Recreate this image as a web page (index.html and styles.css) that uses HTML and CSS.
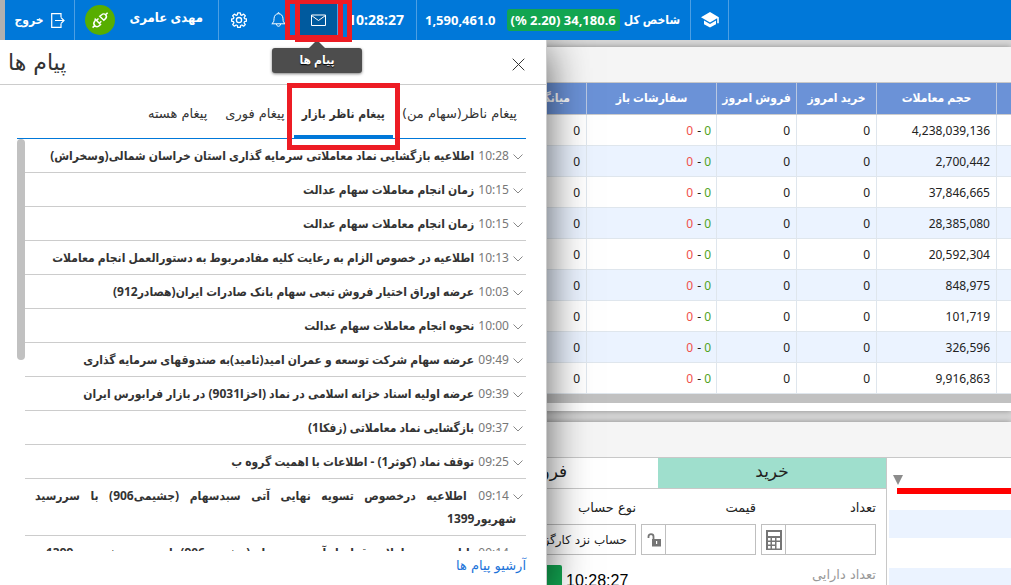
FILE: index.html
```html
<!DOCTYPE html>
<html lang="fa" dir="rtl">
<head>
<meta charset="utf-8">
<title>پیام ها</title>
<link rel="stylesheet" href="styles.css">
</head>
<body>
<header class="topbar">
  <div class="topbar-space"></div>
  <button class="top-item academy" aria-label="آموزش">
    <svg width="18" height="16" viewBox="0 0 18 16"><path fill="#fff" d="M9 0 0 5.2l9 5.2 7.2-4.2v5h1.6v-6zM3 8.6v3.6L9 15.600l6-3.400V8.600L9 12z"/></svg>
  </button>
  <div class="top-item index">
    <span class="index-label">شاخص کل</span>
    <span class="index-change" dir="ltr">(% 2.20) 34,180.6</span>
    <span class="index-value">1,590,461.0</span>
  </div>
  <div class="top-item clock">10:28:27</div>
  <div class="mail-wrap">
    <button class="mail" aria-label="پیام ها">
      <svg width="15" height="12" viewBox="0 0 15 12" fill="none" stroke="#fff"><path d="M.5 1h14v10.500H.5zM.5 1.500l7 5 7-5"/></svg>
    </button>
    <div class="tooltip" role="tooltip">پیام ها</div>
    <span class="mark mark-outer"></span>
    <span class="mark mark-inner"></span>
  </div>
  <button class="top-item bell" aria-label="اعلان ها">
    <svg width="15" height="16" viewBox="0 0 15 16" fill="none" stroke="#fff"><path d="M.8 11.800c1.800-1.300 2.200-2.500 2.200-5C3 3.700 5 1.700 7.500 1.700S12 3.700 12 6.800c0 2.500.4 3.700 2.200 5zM5.500 12c0 3 4 3 4 0M6.700 1.500c0-1.200 1.600-1.200 1.600 0"/></svg>
  </button>
  <button class="top-item gear" aria-label="تنظیمات">
    <svg width="16" height="16" viewBox="0 0 16 16" fill="none" stroke="#fff" stroke-width="1.300"><path stroke-linejoin="round" d="m6.700.8 2.600 0 .4 2 1.200.5 1.700-1.200 1.700 1.700-1.200 1.700.5 1.200 1.900.3v2.200l-1.900.4-.5 1.200 1.200 1.700-1.700 1.700-1.700-1.200-1.200.5-.4 1.800H6.700l-.4-1.800-1.200-.5-1.700 1.200-1.700-1.700 1.200-1.700-.5-1.200L.6 9.200V7l1.800-.3.5-1.200-1.200-1.700 1.700-1.700 1.700 1.200 1.200-.5z"/><circle cx="8" cy="8.100" r="2.600"/></svg>
  </button>
  <div class="top-item user">
    <span class="user-name">مهدی عامری</span>
    <span class="plug">
      <svg width="18" height="18" viewBox="0 0 18 18" fill="none" stroke="#fff" stroke-width="1.500"><path d="m8.800 5.300 4 4 1.700-1.700c1.200-1.200 1.200-2.600.1-3.800-1.200-1.200-2.700-1.200-3.900 0zM14.600 3.700l2-2M4.300 8.300l5.200 5.200-1 1c-1.500 1.500-3.300 1.500-4.700.1-1.300-1.400-1.300-3.200.1-4.700zM3.800 14.400l-2.200 2.200M5.500 9.500l2-2M8.300 12.300l2-2"/></svg>
    </span>
  </div>
  <button class="top-item exit">
    <svg width="14" height="15" viewBox="0 0 14 15" fill="none" stroke="#fff" stroke-width="1.200"><path d="M10 4V.7H.7v13.600H10V11M4 7.500h9M9.800 4.300 13 7.500l-3.200 3.200"/></svg>
    <span>خروج</span>
  </button>
  <div class="edge"></div>
</header>

<main class="stage">
  <section class="panel">
    <div class="toolbar"></div>
    <table class="grid">
      <colgroup><col class="c-edge"><col class="c-volume"><col class="c-day"><col class="c-day"><col class="c-orders"><col class="c-day"><col></colgroup>
      <thead><tr><th></th><th>حجم معاملات</th><th>خرید امروز</th><th>فروش امروز</th><th>سفارشات باز</th><th class="th-avg">میانگین</th><th></th></tr></thead>
      <tbody>
        <tr><td></td><td>4,238,039,136</td><td>0</td><td>0</td><td><span class="up">0</span> - <span class="down">0</span></td><td>0</td><td></td></tr>
        <tr><td></td><td>2,700,442</td><td>0</td><td>0</td><td><span class="up">0</span> - <span class="down">0</span></td><td>0</td><td></td></tr>
        <tr><td></td><td>37,846,665</td><td>0</td><td>0</td><td><span class="up">0</span> - <span class="down">0</span></td><td>0</td><td></td></tr>
        <tr><td></td><td>28,385,080</td><td>0</td><td>0</td><td><span class="up">0</span> - <span class="down">0</span></td><td>0</td><td></td></tr>
        <tr><td></td><td>20,592,304</td><td>0</td><td>0</td><td><span class="up">0</span> - <span class="down">0</span></td><td>0</td><td></td></tr>
        <tr><td></td><td>848,975</td><td>0</td><td>0</td><td><span class="up">0</span> - <span class="down">0</span></td><td>0</td><td></td></tr>
        <tr><td></td><td>101,719</td><td>0</td><td>0</td><td><span class="up">0</span> - <span class="down">0</span></td><td>0</td><td></td></tr>
        <tr><td></td><td>326,596</td><td>0</td><td>0</td><td><span class="up">0</span> - <span class="down">0</span></td><td>0</td><td></td></tr>
        <tr><td></td><td>9,916,863</td><td>0</td><td>0</td><td><span class="up">0</span> - <span class="down">0</span></td><td>0</td><td></td></tr>
      </tbody>
    </table>
    <div class="hscroll"></div>
  </section>

  <section class="panel lower">
    <div class="toolbar"></div>
    <div class="lower-body">
      <div class="quote">
        <svg class="caret" width="10" height="10" viewBox="0 0 10 10"><path fill="#8c8c8c" d="M0 0h10L5 10z"/></svg>
        <div class="quote-bar"></div>
        <div class="quote-row"></div>
        <div class="quote-row"></div>
      </div>
      <form class="order">
        <div class="sides">
          <button type="button" class="side side-buy">خرید</button>
          <button type="button" class="side">فروش</button>
        </div>
        <div class="fields">
          <div class="field">
            <label for="qty">تعداد</label>
            <div class="control">
              <input id="qty" type="text">
              <button type="button" class="addon" aria-label="ماشین حساب">
                <svg width="16" height="20" viewBox="0 0 16 20"><path fill="#757575" fill-rule="evenodd" d="M0 0h16v20H0zM2 2v4h12V2zM2 8v2.500h2.500V8zM6 8v2.500h3V8zM10.500 8v2.500H14V8zM2 12v2.500h2.500V12zM6 12v2.500h3V12zM2 16v2.500h2.500V16zM6 16v2.500h3V16zM10.500 12v6.500H14V12z"/></svg>
              </button>
            </div>
          </div>
          <div class="field">
            <label for="price">قیمت</label>
            <div class="control">
              <input id="price" type="text">
              <button type="button" class="addon" aria-label="قفل قیمت">
                <svg width="14" height="14" viewBox="0 0 14 14"><path fill="none" stroke="#757575" stroke-width="1.800" d="M1.500 5V3.500c0-3.200 5-3.200 5 0V6"/><path fill="#757575" fill-rule="evenodd" d="M5 6h9v7.500H5zM9 8v3h1.200V8z"/></svg>
              </button>
            </div>
          </div>
          <div class="field">
            <label for="account">نوع حساب</label>
            <select id="account" class="account"><option>حساب نزد کارگزاری</option></select>
          </div>
        </div>
        <div class="order-foot">
          <span class="holding">تعداد دارایی</span>
          <span class="order-time">10:28:27</span>
          <button type="button" class="send" aria-label="ارسال خرید"></button>
        </div>
      </form>
    </div>
  </section>

  <aside class="drawer">
    <div class="drawer-head">
      <button class="close" aria-label="بستن"><svg width="13" height="13" viewBox="0 0 13 13" stroke="#333"><path d="m.7.7 11.600 11.600M12.300.7.7 12.300"/></svg></button>
      <h2>پیام ها</h2>
    </div>
    <nav class="tabs">
      <button class="tab">پیغام ناظر(سهام من)</button>
      <button class="tab tab-active">پیغام ناظر بازار<span class="mark mark-tab"></span></button>
      <button class="tab">پیغام فوری</button>
      <button class="tab">پیغام هسته</button>
    </nav>
    <div class="list-wrap">
      <ul class="list">
        <li><svg class="chev" viewBox="0 0 10 6"><path d="m.5.5 4.500 4.500L9.500.5"/></svg><time>10:28</time> <b>اطلاعیه بازگشایی نماد معاملاتی سرمایه گذاری استان خراسان شمالی(وسخراش)</b></li>
        <li><svg class="chev" viewBox="0 0 10 6"><path d="m.5.5 4.500 4.500L9.500.5"/></svg><time>10:15</time> <b>زمان انجام معاملات سهام عدالت</b></li>
        <li><svg class="chev" viewBox="0 0 10 6"><path d="m.5.5 4.500 4.500L9.500.5"/></svg><time>10:15</time> <b>زمان انجام معاملات سهام عدالت</b></li>
        <li><svg class="chev" viewBox="0 0 10 6"><path d="m.5.5 4.500 4.500L9.500.5"/></svg><time>10:13</time> <b>اطلاعیه در خصوص الزام به رعایت کلیه مفادمربوط به دستورالعمل انجام معاملات</b></li>
        <li><svg class="chev" viewBox="0 0 10 6"><path d="m.5.5 4.500 4.500L9.500.5"/></svg><time>10:03</time> <b>عرضه اوراق اختیار فروش تبعی سهام بانک صادرات ایران(هصادر912)</b></li>
        <li><svg class="chev" viewBox="0 0 10 6"><path d="m.5.5 4.500 4.500L9.500.5"/></svg><time>10:00</time> <b>نحوه انجام معاملات سهام عدالت</b></li>
        <li><svg class="chev" viewBox="0 0 10 6"><path d="m.5.5 4.500 4.500L9.500.5"/></svg><time>09:49</time> <b>عرضه سهام شرکت توسعه و عمران امید(ثامید)به صندوقهای سرمایه گذاری</b></li>
        <li><svg class="chev" viewBox="0 0 10 6"><path d="m.5.5 4.500 4.500L9.500.5"/></svg><time>09:39</time> <b>عرضه اولیه اسناد خزانه اسلامی در نماد (اخزا9031) در بازار فرابورس ایران</b></li>
        <li><svg class="chev" viewBox="0 0 10 6"><path d="m.5.5 4.500 4.500L9.500.5"/></svg><time>09:37</time> <b>بازگشایی نماد معاملاتی (زفکا1)</b></li>
        <li><svg class="chev" viewBox="0 0 10 6"><path d="m.5.5 4.500 4.500L9.500.5"/></svg><time>09:25</time> <b>توقف نماد (کوثر1) - اطلاعات با اهمیت گروه ب</b></li>
        <li><svg class="chev" viewBox="0 0 10 6"><path d="m.5.5 4.500 4.500L9.500.5"/></svg><time>09:14</time> <b>اطلاعیه درخصوص تسویه نهایی آتی سبدسهام (جشیمی906) با سررسید شهریور1399</b></li>
        <li><svg class="chev" viewBox="0 0 10 6"><path d="m.5.5 4.500 4.500L9.500.5"/></svg><time>09:14</time> <b>پایان دوره معاملاتی قرارداد آتی سبدسهام (جشیمی906) با سررسید شهریور 1399</b></li>
      </ul>
      <div class="vscroll"><div class="thumb"></div></div>
    </div>
    <a class="archive" href="#">آرشیو پیام ها</a>
  </aside>
</main>
</body>
</html>
```
FILE: styles.css
```css
* { box-sizing: border-box; }
body {
  margin: 0;
  height: 100vh;
  display: flex;
  flex-direction: column;
  overflow: hidden;
  background: #d6d6d6;
  color: #222;
  font: 12px/20px "Noto Sans", "DejaVu Sans Condensed", "DejaVu Sans", sans-serif;
}
button, input, select {
  font: inherit;
  color: inherit;
  border: 0;
  margin: 0;
  padding: 0;
  background: none;
}

/* top bar */
.topbar {
  display: flex;
  flex: none;
  height: 40px;
  background: #0078d9;
  color: #fff;
  font-weight: bold;
  position: relative;
  z-index: 3;
}
.topbar-space { flex: 1; }
.top-item {
  display: flex;
  align-items: center;
  justify-content: center;
  border-right: 1px solid #4d9fe3;
}
.academy { width: 38px; }
.index { width: 274px; gap: 4px; padding-right: 10px; justify-content: flex-start; font-size: 13px; }
.index-label { font-size: 12px; }
.index-change {
  background: #12a551;
  border-radius: 3px;
  padding: 1px 4px;
  white-space: nowrap;
}
.index-value { margin-right: 7px; }
.clock { width: 79px; padding-left: 12px; padding-right: 12px; justify-content: flex-start; font-size: 14px; }
.mail-wrap { position: relative; width: 39px; display: flex; border-right: 1px solid #4d9fe3; }
.mail { flex: 1; background: #005a9e; display: flex; align-items: center; justify-content: center; }
.bell { width: 41px; border: 0; }
.gear { width: 39px; border: 0; }
.user { width: 145px; padding-right: 15px; gap: 15px; justify-content: flex-start; align-items: center; font-size: 13px; border-left: 1px solid #4d9fe3; }
.user-name { padding-bottom: 6px; white-space: nowrap; }
.plug {
  width: 30px;
  height: 30px;
  border-radius: 50%;
  background: #57ae00;
  display: flex;
  align-items: center;
  justify-content: center;
}
.exit { width: 69px; gap: 7px; border: 0; }
.edge { width: 5px; background: #b0b0b0; }

.tooltip {
  position: absolute;
  top: 48px;
  left: -27px;
  width: 90px;
  height: 25px;
  line-height: 24px;
  text-align: center;
  border-radius: 3px;
  background: #4d4d4d;
  box-shadow: 0 1px 3px rgba(0, 0, 0, .5);
  text-shadow: 0 1px 1px #000;
}
.tooltip::before {
  content: "";
  position: absolute;
  top: -8px;
  left: 37px;
  border: 8px solid transparent;
  border-top: 0;
  border-bottom-color: #4d4d4d;
}

/* red highlight frames */
.mark { position: absolute; border: 5px solid #ed1c24; pointer-events: none; }
.mark-outer { left: -14px; top: -1px; width: 58px; height: 41px; }
.mark-inner { left: -4px; top: -1px; width: 57px; height: 43px; }
.mark-tab { left: -7px; top: -2px; right: -7px; bottom: -15px; }

/* workspace */
.stage { position: relative; flex: 1; min-height: 0; overflow: hidden; padding-top: 7px; }
.panel { background: #fff; box-shadow: 0 0 6px rgba(0, 0, 0, .35); }
.toolbar { height: 35px; background: #f5f5f5; }
.grid { width: 100%; table-layout: fixed; border-collapse: separate; border-spacing: 0; border-top: 1px solid #c8c8c8; }
.c-edge { width: 15px; }
.c-volume { width: 120px; }
.c-day { width: 80px; }
.c-orders { width: 130px; }
th { height: 32px; padding: 0 0 2px; background: #6b92d7; color: #fff; border-left: 1px solid #b9c8e2; border-bottom: 1px solid #ccc; white-space: nowrap; }
.th-avg { padding-right: 16px; text-align: right; }
td { height: 31px; padding: 2px 5px 0; border-left: 1px solid #dfe6ed; border-bottom: 1px solid #dfe6ed; direction: ltr; text-align: right; white-space: nowrap; }
tbody tr:nth-child(even) { background: #ebf3ff; }
.up { color: #4fa31d; }
.down { color: #f0504a; margin-right: 1px; }
td:nth-child(5) { direction: rtl; text-align: start; }
.hscroll { height: 17px; border-bottom: 8px solid #fff; background: #c1c1c1; }
.lower { margin-top: 11px; }
.lower-body { display: flex; border-top: 1px solid #c8c8c8; }
.quote { flex: 0 0 125px; border-left: 1px solid #c8c8c8; padding: 17px 0 0 2px; }
.caret { display: block; margin: 0 auto 3px 4px; }
.quote-bar { height: 6px; margin-left: 8px; background: #f00; }
.quote-row { height: 28px; margin: 16px 0 30px; background: #ebf3ff; }
.order { width: 456px; font-family: "DejaVu Sans", sans-serif; font-size: 13px; }
.sides { display: flex; height: 31px; border-bottom: 1px solid #c8c8c8; }
.side { flex: 1; font-size: 17px; line-height: 24px; padding-bottom: 4px; }
.side-buy { background: #9fdfcd; }
.fields { display: flex; gap: 5px; padding: 9px 10px 0; }
.field { width: 115px; flex: none; }
.field label { display: block; height: 26px; }
.control { display: flex; height: 31px; border: 1px solid #bfbfbf; }
.control input { flex: 1; min-width: 0; }
.addon { width: 24px; display: flex; align-items: center; justify-content: center; border-right: 1px solid #bfbfbf; }
.account { width: 115px; height: 31px; border: 1px solid #bfbfbf; padding: 0 8px; appearance: none; border-radius: 0; font-size: 12px; }
.order-foot { display: flex; gap: 4px; padding: 10px 10px 0; }
.holding { margin-left: auto; color: #999; }
.order-time { font: 16px/32px "Liberation Sans", sans-serif; color: #000; }
.send { width: 122px; height: 32px; background: #12a551; border-radius: 2px; }

/* message drawer */
.drawer {
  position: absolute;
  top: 0;
  bottom: 0;
  left: 0;
  width: 547px;
  display: flex;
  flex-direction: column;
  background: #fff;
  border-right: 1px solid #ccc;
  box-shadow: 0 8px 40px rgba(0, 0, 0, .65);
  color: #333;
}
.drawer-head { flex: none; height: 45px; display: flex; align-items: center; justify-content: space-between; padding: 0 21px 0 8px; border-bottom: 1px solid #ccc; }
.drawer-head h2 { margin: 0; font: 22px/30px "DejaVu Sans", sans-serif; padding-top: 2px; }
.close { display: flex; padding-top: 4px; }
.tabs { flex: none; display: flex; height: 54px; margin: 0 20px 0 17px; border-bottom: 1px solid #0078d9; }
.tab { padding: 5px 9px 0; white-space: nowrap; position: relative; font-family: "DejaVu Sans", sans-serif; font-size: 13px; }
.tab-active { font: bold 12px/20px "DejaVu Sans Condensed", sans-serif; border-bottom: 3px solid #0078d9; padding: 8px 8px 0; }
.list-wrap { flex: 1; min-height: 0; display: flex; margin: 0 20px 0 17px; overflow: hidden; }
.list { flex: 1; min-width: 0; list-style: none; margin: 0; padding: 0; }
.list li { padding: 5px 10px; line-height: 23px; border-bottom: 1px solid #ccc; text-align: justify; }
.chev { width: 10px; height: 6px; margin-right: -7px; margin-left: 4px; fill: none; stroke: #888; }
.list time { color: #777; margin-left: 1px; }
.vscroll { width: 8px; }
.thumb { width: 8px; height: 221px; border-radius: 4px; background: #c1c1c1; }
.archive { flex: none; align-self: flex-start; margin: 0 20px 0 0; height: 34px; font: 13px/30px "DejaVu Sans", sans-serif; color: #1a73d9; text-decoration: none; }
```
